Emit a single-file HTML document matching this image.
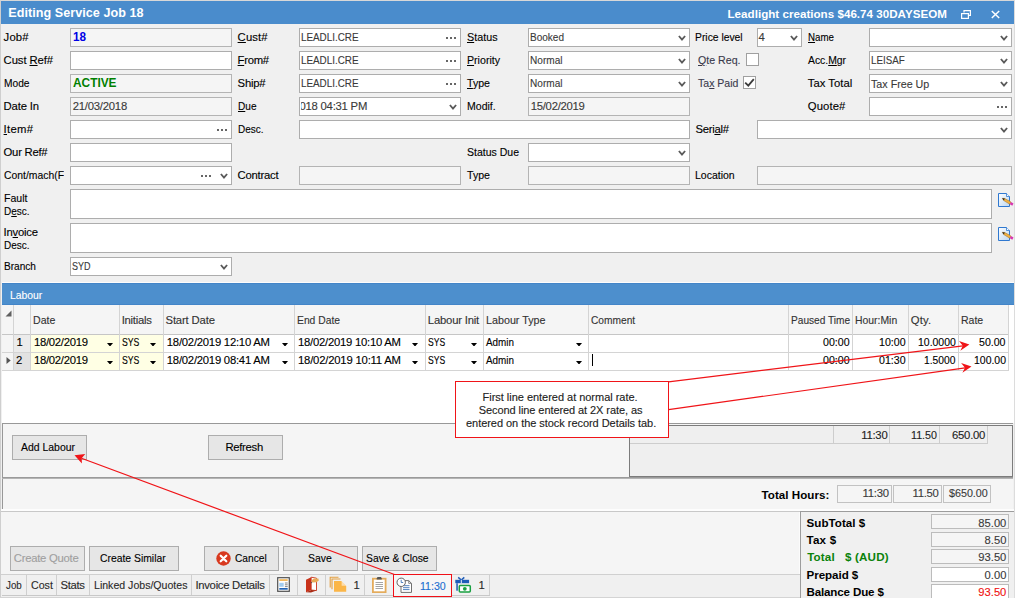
<!DOCTYPE html>
<html lang="en"><head><meta charset="utf-8"><title>Editing Service Job 18</title>
<style>
*{box-sizing:border-box;margin:0;padding:0}
html,body{width:1015px;height:598px;overflow:hidden;background:#f0f0f0;}
body{position:relative;font-family:"Liberation Sans","DejaVu Sans",sans-serif;font-size:11.3px;color:#000;}
.a{position:absolute;white-space:nowrap;}
.t{position:absolute;white-space:pre;height:14px;line-height:14px;-webkit-text-stroke:0.12px currentColor;}
.f{position:absolute;height:19px;border:1px solid #adadad;background:#fff;}
.f.ro{background:#f5f5f5;border-color:#b4b4b4}
.dots{position:absolute;right:4px;top:8px;width:10px;height:2px;background:linear-gradient(90deg,#666 0 2px,transparent 2px 4px,#666 4px 6px,transparent 6px 8px,#666 8px 10px);}
.chev{position:absolute;right:3.500px;top:6px;width:8px;height:7px;}
u{text-decoration:underline;text-underline-offset:1px;text-decoration-thickness:1px}
.btn{position:absolute;border:1px solid #adadad;background:#e6e6e6;}
.vl{position:absolute;width:1px;background:#d4d4d4}
.hl{position:absolute;height:1px;background:#d4d4d4}
.dd{position:absolute;width:6px;height:3px;}
</style></head>
<body>
<div class="a" style="left:0;top:0;width:1015px;height:24px;background:#4a8ccc;border-top:1px solid #d8d8d8;border-right:1px solid #dcdcdc;border-left:1px solid #cfcfcf"></div>
<div class="t" style="left:8.20px;top:5.600000000000001px;font-size:12.6px;color:#fff;font-weight:bold;-webkit-text-stroke:0;letter-spacing:0.050px;">Editing Service Job 18</div>
<div class="t" style="left:727.50px;top:7px;font-size:11.6px;color:#fff;font-weight:bold;-webkit-text-stroke:0;letter-spacing:0.021px;">Leadlight creations $46.74 30DAYSEOM</div>
<svg class="a" style="left:961px;top:10px" width="10" height="9" viewBox="0 0 10 9"><path d="M3 2.600V.6H9.400V5.400H7.400" fill="none" stroke="#fff" stroke-width="1.200"/><rect x=".6" y="3.600" width="6.800" height="4.800" fill="none" stroke="#fff" stroke-width="1.200"/></svg>
<svg class="a" style="left:991px;top:10px" width="9" height="9" viewBox="0 0 9 9"><path d="M.8 1L8.200 8M8.200 1L.8 8" stroke="#fff" stroke-width="1.500"/></svg>
<div class="a" style="left:0;top:24px;width:1px;height:574px;background:#cfcfcf"></div>
<div class="a" style="left:1014px;top:24px;width:1px;height:574px;background:#dcdcdc"></div>
<div class="t" style="left:3.60px;top:30px;font-size:11.3px;color:#000;letter-spacing:0.160px;">Job#</div>
<div class="f ro" style="left:70px;top:28px;width:162px;height:19px"></div>
<div class="t" style="left:72.70px;top:30px;font-size:12px;color:#0000e6;font-weight:bold;-webkit-text-stroke:0;transform-origin:0 0;transform:scaleX(0.9760);">18</div>
<div class="t" style="left:3.60px;top:53px;font-size:11.3px;color:#000;letter-spacing:-0.091px;">Cust <u>R</u>ef#</div>
<div class="f" style="left:70px;top:51px;width:162px;height:19px"></div>
<div class="t" style="left:3.60px;top:76px;font-size:11.3px;color:#000;transform-origin:0 0;transform:scaleX(0.9027);">Mode</div>
<div class="f ro" style="left:70px;top:74px;width:162px;height:19px"></div>
<div class="t" style="left:72.70px;top:76px;font-size:12.6px;color:#008000;font-weight:bold;-webkit-text-stroke:0;transform-origin:0 0;transform:scaleX(0.9420);">ACTIVE</div>
<div class="t" style="left:3.60px;top:99px;font-size:11.3px;color:#000;letter-spacing:-0.157px;">Date In</div>
<div class="f ro" style="left:70px;top:97px;width:162px;height:19px"></div>
<div class="t" style="left:72.70px;top:99px;font-size:11.3px;color:#3a3a3a;letter-spacing:-0.228px;">21/03/2018</div>
<div class="t" style="left:3.60px;top:122px;font-size:11.3px;color:#000;letter-spacing:0.312px;"><u>I</u>tem#</div>
<div class="f" style="left:70px;top:120px;width:162px;height:19px"><i class="dots"></i></div>
<div class="t" style="left:3.60px;top:145px;font-size:11.3px;color:#000;letter-spacing:-0.260px;">Our Ref#</div>
<div class="f" style="left:70px;top:143px;width:162px;height:19px"></div>
<div class="a" style="left:0;top:166px;width:64px;height:19px;overflow:hidden">
<div class="t" style="left:3.60px;top:2px;font-size:11.3px;color:#000;transform-origin:0 0;transform:scaleX(0.9186);">Cont/mach(F</div>
</div>
<div class="f" style="left:70px;top:166px;width:162px;height:19px"><i class="dots" style="right:20px"></i><svg class="chev" viewBox="0 0 8 7"><path d="M0.900 1 L4 4.700 L7.100 1" fill="none" stroke="#5a5a5a" stroke-width="1.800"/></svg></div>
<div class="t" style="left:237.60px;top:30px;font-size:11.3px;color:#000;letter-spacing:0.127px;"><u>C</u>ust#</div>
<div class="f" style="left:299px;top:28px;width:162px;height:19px"><i class="dots"></i></div>
<div class="t" style="left:300.60px;top:30px;font-size:11.3px;color:#3a3a3a;transform-origin:0 0;transform:scaleX(0.8721);">LEADLI.CRE</div>
<div class="t" style="left:237.60px;top:53px;font-size:11.3px;color:#000;letter-spacing:-0.289px;"><u>F</u>rom#</div>
<div class="f" style="left:299px;top:51px;width:162px;height:19px"><i class="dots"></i></div>
<div class="t" style="left:300.60px;top:53px;font-size:11.3px;color:#3a3a3a;transform-origin:0 0;transform:scaleX(0.8721);">LEADLI.CRE</div>
<div class="t" style="left:237.60px;top:76px;font-size:11.3px;color:#000;letter-spacing:-0.232px;">Ship#</div>
<div class="f" style="left:299px;top:74px;width:162px;height:19px"><i class="dots"></i></div>
<div class="t" style="left:300.60px;top:76px;font-size:11.3px;color:#3a3a3a;transform-origin:0 0;transform:scaleX(0.8721);">LEADLI.CRE</div>
<div class="t" style="left:237.60px;top:99px;font-size:11.3px;color:#000;transform-origin:0 0;transform:scaleX(0.8922);"><u>D</u>ue</div>
<div class="f" style="left:299px;top:97px;width:162px;height:19px"><svg class="chev" viewBox="0 0 8 7"><path d="M0.900 1 L4 4.700 L7.100 1" fill="none" stroke="#5a5a5a" stroke-width="1.800"/></svg></div>
<div class="a" style="left:301px;top:97px;width:140px;height:19px;overflow:hidden">
<div class="t" style="left:-1.60px;top:2px;font-size:11.3px;color:#3a3a3a;letter-spacing:-0.222px;">018 04:31 PM</div>
</div>
<div class="t" style="left:237.60px;top:122px;font-size:11.3px;color:#000;transform-origin:0 0;transform:scaleX(0.8832);">Desc.</div>
<div class="f" style="left:299px;top:120px;width:391px;height:19px"></div>
<div class="t" style="left:237.60px;top:168px;font-size:11.3px;color:#000;letter-spacing:-0.245px;">Contract</div>
<div class="f ro" style="left:299px;top:166px;width:162px;height:19px"></div>
<div class="t" style="left:466.80px;top:30px;font-size:11.3px;color:#000;transform-origin:0 0;transform:scaleX(0.9521);"><u>S</u>tatus</div>
<div class="f" style="left:528px;top:28px;width:162px;height:19px"><svg class="chev" viewBox="0 0 8 7"><path d="M0.900 1 L4 4.700 L7.100 1" fill="none" stroke="#5a5a5a" stroke-width="1.800"/></svg></div>
<div class="t" style="left:529.60px;top:30px;font-size:11.3px;color:#3a3a3a;transform-origin:0 0;transform:scaleX(0.8876);">Booked</div>
<div class="t" style="left:466.80px;top:53px;font-size:11.3px;color:#000;transform-origin:0 0;transform:scaleX(0.9390);"><u>P</u>riority</div>
<div class="f" style="left:528px;top:51px;width:162px;height:19px"><svg class="chev" viewBox="0 0 8 7"><path d="M0.900 1 L4 4.700 L7.100 1" fill="none" stroke="#5a5a5a" stroke-width="1.800"/></svg></div>
<div class="t" style="left:529.60px;top:53px;font-size:11.3px;color:#3a3a3a;transform-origin:0 0;transform:scaleX(0.8918);">Normal</div>
<div class="t" style="left:466.80px;top:76px;font-size:11.3px;color:#000;transform-origin:0 0;transform:scaleX(0.9380);"><u>T</u>ype</div>
<div class="f" style="left:528px;top:74px;width:162px;height:19px"><svg class="chev" viewBox="0 0 8 7"><path d="M0.900 1 L4 4.700 L7.100 1" fill="none" stroke="#5a5a5a" stroke-width="1.800"/></svg></div>
<div class="t" style="left:529.60px;top:76px;font-size:11.3px;color:#3a3a3a;transform-origin:0 0;transform:scaleX(0.8918);">Normal</div>
<div class="t" style="left:466.80px;top:99px;font-size:11.3px;color:#000;transform-origin:0 0;transform:scaleX(0.9320);">Modif.</div>
<div class="f ro" style="left:528px;top:97px;width:162px;height:19px"></div>
<div class="t" style="left:530.70px;top:99px;font-size:11.3px;color:#3a3a3a;letter-spacing:-0.262px;">15/02/2019</div>
<div class="t" style="left:466.80px;top:145px;font-size:11.3px;color:#000;transform-origin:0 0;transform:scaleX(0.9306);">Status Due</div>
<div class="f" style="left:528px;top:143px;width:162px;height:19px"><svg class="chev" viewBox="0 0 8 7"><path d="M0.900 1 L4 4.700 L7.100 1" fill="none" stroke="#5a5a5a" stroke-width="1.800"/></svg></div>
<div class="t" style="left:466.80px;top:168px;font-size:11.3px;color:#000;transform-origin:0 0;transform:scaleX(0.9380);">Type</div>
<div class="f ro" style="left:528px;top:166px;width:162px;height:19px"></div>
<div class="t" style="left:695.40px;top:30px;font-size:11.3px;color:#000;transform-origin:0 0;transform:scaleX(0.9147);">Price level</div>
<div class="f" style="left:757px;top:28px;width:45px;height:19px"><svg class="chev" viewBox="0 0 8 7"><path d="M0.900 1 L4 4.700 L7.100 1" fill="none" stroke="#5a5a5a" stroke-width="1.800"/></svg></div>
<div class="t" style="left:758.60px;top:30px;font-size:11.3px;color:#3a3a3a;">4</div>
<div class="t" style="left:697.80px;top:53px;font-size:11.3px;color:#3a3a4c;transform-origin:0 0;transform:scaleX(0.9403);"><u>Q</u>te Req.</div>
<div class="a" style="left:746px;top:53px;width:13px;height:13px;border:1px solid #a0a0a0;background:#fff"></div>
<div class="t" style="left:697.80px;top:76px;font-size:11.3px;color:#3a3a4c;transform-origin:0 0;transform:scaleX(0.9323);">Ta<u>x</u> Paid</div>
<div class="a" style="left:743px;top:76px;width:13px;height:13px;border:1px solid #a0a0a0;background:#fff"><svg style="position:absolute;left:0;top:0" width="11" height="11" viewBox="0 0 11 11"><path d="M1.200 5.600L4.300 8.700L9.800 2.200" fill="none" stroke="#3c3c3c" stroke-width="1.800"/></svg></div>
<div class="t" style="left:695.40px;top:122px;font-size:11.3px;color:#000;letter-spacing:-0.267px;">Seri<u>a</u>l#</div>
<div class="f" style="left:757px;top:120px;width:255px;height:19px"><svg class="chev" viewBox="0 0 8 7"><path d="M0.900 1 L4 4.700 L7.100 1" fill="none" stroke="#5a5a5a" stroke-width="1.800"/></svg></div>
<div class="t" style="left:695.40px;top:168px;font-size:11.3px;color:#000;transform-origin:0 0;transform:scaleX(0.9294);">Location</div>
<div class="f ro" style="left:757px;top:166px;width:255px;height:19px"></div>
<div class="t" style="left:807.80px;top:30px;font-size:11.3px;color:#000;transform-origin:0 0;transform:scaleX(0.8618);"><u>N</u>ame</div>
<div class="f" style="left:869px;top:28px;width:143px;height:19px"><svg class="chev" viewBox="0 0 8 7"><path d="M0.900 1 L4 4.700 L7.100 1" fill="none" stroke="#5a5a5a" stroke-width="1.800"/></svg></div>
<div class="t" style="left:807.80px;top:53px;font-size:11.3px;color:#000;transform-origin:0 0;transform:scaleX(0.9176);">Acc.<u>M</u>gr</div>
<div class="f" style="left:869px;top:51px;width:143px;height:19px"><svg class="chev" viewBox="0 0 8 7"><path d="M0.900 1 L4 4.700 L7.100 1" fill="none" stroke="#5a5a5a" stroke-width="1.800"/></svg></div>
<div class="t" style="left:870.60px;top:53px;font-size:11.3px;color:#3a3a3a;transform-origin:0 0;transform:scaleX(0.8631);">LEISAF</div>
<div class="t" style="left:807.80px;top:76px;font-size:11.3px;color:#000;letter-spacing:0.011px;">Tax Total</div>
<div class="f" style="left:869px;top:74px;width:143px;height:19px"><svg class="chev" viewBox="0 0 8 7"><path d="M0.900 1 L4 4.700 L7.100 1" fill="none" stroke="#5a5a5a" stroke-width="1.800"/></svg></div>
<div class="t" style="left:870.60px;top:77px;font-size:11.3px;color:#3a3a3a;transform-origin:0 0;transform:scaleX(0.9475);">Tax Free Up</div>
<div class="t" style="left:807.80px;top:99px;font-size:11.3px;color:#000;letter-spacing:0.087px;">Quote#</div>
<div class="f" style="left:869px;top:97px;width:143px;height:19px"><i class="dots"></i></div>
<div class="t" style="left:3.60px;top:191px;font-size:11.3px;color:#000;transform-origin:0 0;transform:scaleX(0.9347);">Fault</div>
<div class="t" style="left:3.60px;top:204px;font-size:11.3px;color:#000;transform-origin:0 0;transform:scaleX(0.8832);">D<u>e</u>sc.</div>
<div class="f" style="left:70px;top:189px;width:922px;height:30px"></div>
<div class="t" style="left:3.60px;top:225px;font-size:11.3px;color:#000;letter-spacing:-0.220px;">In<u>v</u>oice</div>
<div class="t" style="left:3.60px;top:238px;font-size:11.3px;color:#000;transform-origin:0 0;transform:scaleX(0.8832);">Desc.</div>
<div class="f" style="left:70px;top:223px;width:922px;height:30px"></div>
<div class="t" style="left:3.60px;top:259px;font-size:11.3px;color:#000;transform-origin:0 0;transform:scaleX(0.8933);">Branch</div>
<div class="f" style="left:70px;top:257px;width:162px;height:19px"><svg class="chev" viewBox="0 0 8 7"><path d="M0.900 1 L4 4.700 L7.100 1" fill="none" stroke="#5a5a5a" stroke-width="1.800"/></svg></div>
<div class="t" style="left:71.60px;top:259px;font-size:11.3px;color:#3a3a3a;transform-origin:0 0;transform:scaleX(0.7967);">SYD</div>
<svg class="a" style="left:998px;top:193px" width="16" height="15" viewBox="0 0 16 15"><defs><linearGradient id="pg193" x1="0" y1="0" x2="1" y2="1"><stop offset="0" stop-color="#fff"/><stop offset="1" stop-color="#bcd6f0"/></linearGradient></defs><path d="M.5 .5H8.500L11.500 3.500V13.500H.5Z" fill="url(#pg193)" stroke="#2f78d0"/><path d="M8.500 .5V3.500H11.500" fill="#fff" stroke="#2f78d0" stroke-width=".8"/><path d="M4.300 5.300L6.800 5.500L13 9L11.800 11.200L5.800 7.600Z" fill="#f0b040" stroke="#a06a18" stroke-width=".5"/><path d="M4.300 5.300L6.800 5.500L5.800 7.600Z" fill="#222"/><path d="M13 9L15.500 10.500L14.300 12.700L11.800 11.200Z" fill="#d838b0"/></svg>
<svg class="a" style="left:998px;top:227px" width="16" height="15" viewBox="0 0 16 15"><defs><linearGradient id="pg227" x1="0" y1="0" x2="1" y2="1"><stop offset="0" stop-color="#fff"/><stop offset="1" stop-color="#bcd6f0"/></linearGradient></defs><path d="M.5 .5H8.500L11.500 3.500V13.500H.5Z" fill="url(#pg227)" stroke="#2f78d0"/><path d="M8.500 .5V3.500H11.500" fill="#fff" stroke="#2f78d0" stroke-width=".8"/><path d="M4.300 5.300L6.800 5.500L13 9L11.800 11.200L5.800 7.600Z" fill="#f0b040" stroke="#a06a18" stroke-width=".5"/><path d="M4.300 5.300L6.800 5.500L5.800 7.600Z" fill="#222"/><path d="M13 9L15.500 10.500L14.300 12.700L11.800 11.200Z" fill="#d838b0"/></svg>
<div class="a" style="left:2px;top:282px;width:1012px;height:1px;background:#fcfcfc"></div>
<div class="a" style="left:2px;top:283px;width:1012px;height:22px;background:#4d8fcd;border-top:1px solid #4385c8;border-bottom:1px solid #4385c8"></div>
<div class="t" style="left:9.50px;top:288px;font-size:11.3px;color:#fff;transform-origin:0 0;transform:scaleX(0.9176);">Labour</div>
<div class="a" style="left:2px;top:305px;width:1012px;height:118px;background:#fff"></div>
<div class="a" style="left:2px;top:305px;width:1006px;height:29px;background:#f5f5f5"></div>
<div class="hl" style="left:2px;top:334px;width:1007px;background:#c6c6c6"></div>
<div class="hl" style="left:2px;top:352px;width:1007px;"></div>
<div class="hl" style="left:2px;top:370px;width:1007px;"></div>
<div class="a" style="left:14px;top:335px;width:16px;height:17px;background:#ebebeb"></div>
<div class="a" style="left:14px;top:353px;width:16px;height:17px;background:#e2e2e2"></div>
<div class="a" style="left:2px;top:335px;width:11px;height:35px;background:#f5f5f5"></div>
<div class="hl" style="left:2px;top:352px;width:12px;"></div>
<div class="a" style="left:31px;top:335px;width:88px;height:17px;background:#ffffe4"></div>
<div class="a" style="left:120px;top:335px;width:43px;height:17px;background:#ffffe4"></div>
<div class="a" style="left:31px;top:353px;width:88px;height:17px;background:#ffffe4"></div>
<div class="a" style="left:120px;top:353px;width:43px;height:17px;background:#ffffe4"></div>
<div class="vl" style="left:13px;top:305px;height:66px"></div>
<div class="vl" style="left:30px;top:305px;height:66px"></div>
<div class="vl" style="left:119px;top:305px;height:66px"></div>
<div class="vl" style="left:163px;top:305px;height:66px"></div>
<div class="vl" style="left:294px;top:305px;height:66px"></div>
<div class="vl" style="left:425px;top:305px;height:66px"></div>
<div class="vl" style="left:483px;top:305px;height:66px"></div>
<div class="vl" style="left:588px;top:305px;height:66px"></div>
<div class="vl" style="left:788px;top:305px;height:66px"></div>
<div class="vl" style="left:852px;top:305px;height:66px"></div>
<div class="vl" style="left:908px;top:305px;height:66px"></div>
<div class="vl" style="left:958px;top:305px;height:66px"></div>
<div class="vl" style="left:1008px;top:305px;height:66px"></div>
<div class="a" style="left:2px;top:423px;width:1px;height:86px;background:#989898"></div>
<div class="t" style="left:32.80px;top:313px;font-size:11.3px;color:#333;transform-origin:0 0;transform:scaleX(0.9353);">Date</div>
<div class="t" style="left:121.70px;top:313px;font-size:11.3px;color:#333;letter-spacing:-0.248px;">Initials</div>
<div class="t" style="left:165.50px;top:313px;font-size:11.3px;color:#333;letter-spacing:-0.150px;">Start Date</div>
<div class="t" style="left:296.60px;top:313px;font-size:11.3px;color:#333;transform-origin:0 0;transform:scaleX(0.9125);">End Date</div>
<div class="t" style="left:427.80px;top:313px;font-size:11.3px;color:#333;letter-spacing:-0.199px;">Labour Init</div>
<div class="t" style="left:485.60px;top:313px;font-size:11.3px;color:#333;transform-origin:0 0;transform:scaleX(0.9504);">Labour Type</div>
<div class="t" style="left:591.00px;top:313px;font-size:11.3px;color:#333;transform-origin:0 0;transform:scaleX(0.9023);">Comment</div>
<div class="t" style="left:790.60px;top:313px;font-size:11.3px;color:#333;transform-origin:0 0;transform:scaleX(0.8978);">Paused Time</div>
<div class="t" style="left:854.70px;top:313px;font-size:11.3px;color:#333;transform-origin:0 0;transform:scaleX(0.9210);">Hour:Min</div>
<div class="t" style="left:910.70px;top:313px;font-size:11.3px;color:#333;letter-spacing:0.171px;">Qty.</div>
<div class="t" style="left:960.50px;top:313px;font-size:11.3px;color:#333;transform-origin:0 0;transform:scaleX(0.9311);">Rate</div>
<svg class="a" style="left:5px;top:310px" width="7" height="7" viewBox="0 0 7 7"><path d="M6.500 .5V6.500H.5Z" fill="#606060"/></svg>
<div class="t" style="left:16.60px;top:335px;font-size:11.3px;color:#000;">1</div>
<div class="t" style="left:33.90px;top:335px;font-size:11.3px;color:#000;letter-spacing:-0.262px;">18/02/2019</div>
<div class="t" style="left:121.90px;top:335px;font-size:11.3px;color:#000;transform-origin:0 0;transform:scaleX(0.7699);">SYS</div>
<div class="t" style="left:166.80px;top:335px;font-size:11.3px;color:#000;letter-spacing:-0.237px;">18/02/2019 12:10 AM</div>
<div class="t" style="left:298.00px;top:335px;font-size:11.3px;color:#000;letter-spacing:-0.248px;">18/02/2019 10:10 AM</div>
<div class="t" style="left:427.80px;top:335px;font-size:11.3px;color:#000;transform-origin:0 0;transform:scaleX(0.7611);">SYS</div>
<div class="t" style="left:486.10px;top:335px;font-size:11.3px;color:#000;transform-origin:0 0;transform:scaleX(0.8740);">Admin</div>
<div class="t" style="left:823.20px;top:335px;font-size:11.3px;color:#000;transform-origin:0 0;transform:scaleX(0.9397);">00:00</div>
<div class="t" style="left:879.10px;top:335px;font-size:11.3px;color:#000;transform-origin:0 0;transform:scaleX(0.9397);">10:00</div>
<div class="t" style="left:917.90px;top:335px;font-size:11.3px;color:#000;transform-origin:0 0;transform:scaleX(0.9253);">10.0000</div>
<div class="t" style="left:979.20px;top:335px;font-size:11.3px;color:#000;transform-origin:0 0;transform:scaleX(0.9362);">50.00</div>
<svg class="dd" style="left:106.5px;top:343px" viewBox="0 0 6 3"><path d="M0 0H6L3.500 3H2.500Z" fill="#000"/></svg>
<svg class="dd" style="left:150.4px;top:343px" viewBox="0 0 6 3"><path d="M0 0H6L3.500 3H2.500Z" fill="#000"/></svg>
<svg class="dd" style="left:282px;top:343px" viewBox="0 0 6 3"><path d="M0 0H6L3.500 3H2.500Z" fill="#000"/></svg>
<svg class="dd" style="left:412px;top:343px" viewBox="0 0 6 3"><path d="M0 0H6L3.500 3H2.500Z" fill="#000"/></svg>
<svg class="dd" style="left:470.6px;top:343px" viewBox="0 0 6 3"><path d="M0 0H6L3.500 3H2.500Z" fill="#000"/></svg>
<svg class="dd" style="left:575.6px;top:343px" viewBox="0 0 6 3"><path d="M0 0H6L3.500 3H2.500Z" fill="#000"/></svg>
<div class="t" style="left:15.90px;top:353px;font-size:11.3px;color:#000;">2</div>
<div class="t" style="left:33.90px;top:353px;font-size:11.3px;color:#000;letter-spacing:-0.262px;">18/02/2019</div>
<div class="t" style="left:121.90px;top:353px;font-size:11.3px;color:#000;transform-origin:0 0;transform:scaleX(0.7699);">SYS</div>
<div class="t" style="left:166.80px;top:353px;font-size:11.3px;color:#000;letter-spacing:-0.237px;">18/02/2019 08:41 AM</div>
<div class="t" style="left:298.00px;top:353px;font-size:11.3px;color:#000;letter-spacing:-0.201px;">18/02/2019 10:11 AM</div>
<div class="t" style="left:427.80px;top:353px;font-size:11.3px;color:#000;transform-origin:0 0;transform:scaleX(0.7611);">SYS</div>
<div class="t" style="left:486.10px;top:353px;font-size:11.3px;color:#000;transform-origin:0 0;transform:scaleX(0.8740);">Admin</div>
<div class="t" style="left:823.20px;top:353px;font-size:11.3px;color:#000;transform-origin:0 0;transform:scaleX(0.9397);">00:00</div>
<div class="t" style="left:879.10px;top:353px;font-size:11.3px;color:#000;transform-origin:0 0;transform:scaleX(0.9397);">01:30</div>
<div class="t" style="left:924.20px;top:353px;font-size:11.3px;color:#000;transform-origin:0 0;transform:scaleX(0.9110);">1.5000</div>
<div class="t" style="left:973.70px;top:353px;font-size:11.3px;color:#000;transform-origin:0 0;transform:scaleX(0.9254);">100.00</div>
<svg class="dd" style="left:106.5px;top:361px" viewBox="0 0 6 3"><path d="M0 0H6L3.500 3H2.500Z" fill="#000"/></svg>
<svg class="dd" style="left:150.4px;top:361px" viewBox="0 0 6 3"><path d="M0 0H6L3.500 3H2.500Z" fill="#000"/></svg>
<svg class="dd" style="left:282px;top:361px" viewBox="0 0 6 3"><path d="M0 0H6L3.500 3H2.500Z" fill="#000"/></svg>
<svg class="dd" style="left:412px;top:361px" viewBox="0 0 6 3"><path d="M0 0H6L3.500 3H2.500Z" fill="#000"/></svg>
<svg class="dd" style="left:470.6px;top:361px" viewBox="0 0 6 3"><path d="M0 0H6L3.500 3H2.500Z" fill="#000"/></svg>
<svg class="dd" style="left:575.6px;top:361px" viewBox="0 0 6 3"><path d="M0 0H6L3.500 3H2.500Z" fill="#000"/></svg>
<div class="a" style="left:592px;top:354px;width:1px;height:12px;background:#000"></div>
<svg class="a" style="left:5.600px;top:357px" width="5" height="7" viewBox="0 0 5 7"><path d="M.5 0L4.700 3.500L.5 7Z" fill="#555"/></svg>
<div class="a" style="left:3px;top:424px;width:1010px;height:53px;background:#f5f5f5"></div>
<div class="hl" style="left:2px;top:423px;width:1011px;background:#989898"></div>
<div class="btn" style="left:12px;top:435px;width:75px;height:25px"></div>
<div class="t" style="left:20.80px;top:440px;font-size:11.3px;color:#000;transform-origin:0 0;transform:scaleX(0.9243);">Add Labour</div>
<div class="btn" style="left:208px;top:435px;width:75px;height:25px"></div>
<div class="t" style="left:225.40px;top:440px;font-size:11.3px;color:#000;letter-spacing:-0.292px;">Refresh</div>
<div class="a" style="left:629px;top:425px;width:384px;height:52px;border:1px solid #7c7c7c;background:#efefef"></div>
<div class="hl" style="left:630px;top:443px;width:358px;background:#cdcdcd"></div>
<div class="vl" style="left:833px;top:426px;height:17px;background:#cdcdcd"></div>
<div class="vl" style="left:889px;top:426px;height:17px;background:#cdcdcd"></div>
<div class="vl" style="left:939px;top:426px;height:17px;background:#cdcdcd"></div>
<div class="vl" style="left:987px;top:426px;height:17px;background:#cdcdcd"></div>
<div class="t" style="left:861.30px;top:428px;font-size:11.3px;color:#222;letter-spacing:-0.265px;">11:30</div>
<div class="t" style="left:911.40px;top:428px;font-size:11.3px;color:#222;transform-origin:0 0;transform:scaleX(0.9469);">11.50</div>
<div class="t" style="left:952.00px;top:428px;font-size:11.3px;color:#222;letter-spacing:-0.236px;">650.00</div>
<div class="a" style="left:2px;top:477px;width:1011px;height:1px;background:#9a9a9a"></div>
<div class="a" style="left:2px;top:478px;width:1011px;height:1px;background:#b4b4b4"></div>
<div class="a" style="left:3px;top:479px;width:1010px;height:30px;background:#f5f5f5"></div>
<div class="a" style="left:1px;top:509px;width:1013px;height:2px;background:#fdfdfd"></div>
<div class="a" style="left:1px;top:511px;width:800px;height:1px;background:#c8c8c8"></div>
<div class="t" style="left:761.60px;top:488px;font-size:11.6px;color:#000;font-weight:bold;-webkit-text-stroke:0;letter-spacing:0.022px;">Total Hours:</div>
<div class="a" style="left:837px;top:485px;width:55px;height:18px;border:1px solid #c2c2c2;background:#f5f5f5"></div>
<div class="a" style="left:893px;top:485px;width:49px;height:18px;border:1px solid #c2c2c2;background:#f5f5f5"></div>
<div class="a" style="left:943px;top:485px;width:48px;height:18px;border:1px solid #c2c2c2;background:#f5f5f5"></div>
<div class="t" style="left:862.60px;top:486px;font-size:11.3px;color:#3a3a3a;letter-spacing:-0.265px;">11:30</div>
<div class="t" style="left:912.50px;top:486px;font-size:11.3px;color:#3a3a3a;letter-spacing:-0.265px;">11.50</div>
<div class="t" style="left:949.20px;top:486px;font-size:11.3px;color:#3a3a3a;transform-origin:0 0;transform:scaleX(0.9498);">$650.00</div>
<div class="a" style="left:1px;top:512px;width:799px;height:62px;background:#f5f5f5"></div>
<div class="a" style="left:1px;top:574px;width:799px;height:24px;background:#f0f0f0;border-top:1px solid #d0d0d0"></div>
<div class="btn" style="left:10px;top:546px;width:75px;height:25px"></div>
<div class="t" style="left:13.80px;top:551px;font-size:11.3px;color:#a0a0a0;letter-spacing:-0.260px;">Create Quote</div>
<div class="btn" style="left:89px;top:546px;width:90px;height:25px"></div>
<div class="t" style="left:99.60px;top:551px;font-size:11.3px;color:#000;transform-origin:0 0;transform:scaleX(0.9178);">Create Similar</div>
<div class="btn" style="left:204px;top:546px;width:75px;height:25px"></div>
<svg class="a" style="left:216px;top:551px" width="15" height="15" viewBox="0 0 15 15"><circle cx="7.500" cy="7.500" r="7.200" fill="#d8391f"/><path d="M4.700 4.700L10.300 10.300M10.300 4.700L4.700 10.300" stroke="#fff" stroke-width="2.200" stroke-linecap="round"/></svg>
<div class="t" style="left:234.60px;top:551px;font-size:11.3px;color:#000;transform-origin:0 0;transform:scaleX(0.9006);">Cancel</div>
<div class="btn" style="left:283px;top:546px;width:75px;height:25px"></div>
<div class="t" style="left:307.50px;top:551px;font-size:11.3px;color:#000;transform-origin:0 0;transform:scaleX(0.9199);">Save</div>
<div class="btn" style="left:362px;top:546px;width:75px;height:25px"></div>
<div class="t" style="left:366.40px;top:551px;font-size:11.3px;color:#000;transform-origin:0 0;transform:scaleX(0.9142);">Save &amp; Close</div>
<div class="t" style="left:6.20px;top:578px;font-size:11.3px;color:#2a2a2a;transform-origin:0 0;transform:scaleX(0.8685);">Job</div>
<div class="t" style="left:30.70px;top:578px;font-size:11.3px;color:#2a2a2a;transform-origin:0 0;transform:scaleX(0.9431);">Cost</div>
<div class="t" style="left:60.40px;top:578px;font-size:11.3px;color:#2a2a2a;letter-spacing:-0.291px;">Stats</div>
<div class="t" style="left:93.50px;top:578px;font-size:11.3px;color:#2a2a2a;transform-origin:0 0;transform:scaleX(0.9360);">Linked Jobs/Quotes</div>
<div class="t" style="left:195.40px;top:578px;font-size:11.3px;color:#2a2a2a;letter-spacing:-0.279px;">Invoice Details</div>
<div class="vl" style="left:26px;top:575px;height:20px;background:#cfcfcf"></div>
<div class="vl" style="left:56px;top:575px;height:20px;background:#cfcfcf"></div>
<div class="vl" style="left:89px;top:575px;height:20px;background:#cfcfcf"></div>
<div class="vl" style="left:191px;top:575px;height:20px;background:#cfcfcf"></div>
<div class="vl" style="left:269px;top:575px;height:20px;background:#cfcfcf"></div>
<div class="vl" style="left:297px;top:575px;height:20px;background:#cfcfcf"></div>
<div class="vl" style="left:325px;top:575px;height:20px;background:#cfcfcf"></div>
<div class="vl" style="left:364px;top:575px;height:20px;background:#cfcfcf"></div>
<div class="vl" style="left:489px;top:575px;height:20px;background:#cfcfcf"></div>
<svg class="a" style="left:277px;top:577px" width="13" height="15" viewBox="0 0 13 15"><rect x=".7" y=".7" width="11.600" height="13.600" fill="#fff" stroke="#505050" stroke-width="1.200"/><rect x="2.300" y="2.300" width="8.400" height="1.500" fill="#f0a838"/><rect x="2.300" y="5.800" width="4.400" height="4" fill="#a4cdf0"/><path d="M7.900 6H10.700M7.900 7.800H10.700M7.900 9.600H10.700" stroke="#666" stroke-width=".8"/><rect x="2.300" y="11" width="8.400" height="1.700" fill="#2464b4"/></svg>
<svg class="a" style="left:305px;top:576px" width="15" height="17" viewBox="0 0 15 17"><path d="M1 3.800L6.200 1.200V14L1 16.200Z" fill="#c8321a"/><path d="M6.200 1.200L11.500 2.200V14.600L6.200 14Z" fill="#fff" stroke="#c8321a" stroke-width=".9"/><path d="M1 16.200L6.200 14L11.500 14.600L6 16.600Z" fill="#a82a14"/><path d="M6.500 4.200L9 2.600L13.400 2.400L13.800 4.600L11.500 6.200L7.200 6.400Z" fill="#e8ac58"/><circle cx="6.400" cy="6.600" r=".7" fill="#555"/></svg>
<svg class="a" style="left:329px;top:576px" width="18" height="17" viewBox="0 0 18 17"><path d="M1.200 11.500V1.200H9.500" fill="none" stroke="#e4a040" stroke-width="1.100"/><path d="M3 13.300V3H11.500" fill="none" stroke="#e4a040" stroke-width="1.100"/><path d="M5 5H12.300L17.200 10V15.800H5Z" fill="#fbb648"/><path d="M12.600 5.300V9.700H17Z" fill="#fff" opacity=".55"/></svg>
<div class="t" style="left:353.40px;top:578px;font-size:11.3px;color:#2a2a2a;">1</div>
<svg class="a" style="left:372px;top:576px" width="15" height="17" viewBox="0 0 15 17"><rect x=".9" y="2.700" width="12.700" height="13.500" fill="#fff" stroke="#e4ac5c" stroke-width="1.800"/><path d="M4.700 2.600L5.500 1H9L9.800 2.600V3.600H4.700Z" fill="#555"/><path d="M3.500 6.500H11M3.500 8.500H11M3.500 10.500H11M3.500 12.500H11" stroke="#9a9a9a" stroke-width=".9"/></svg>
<div class="hl" style="left:2px;top:595px;width:488px;background:#c8c8c8"></div>
<div class="hl" style="left:0px;top:597px;width:800px;background:#d4d4d4"></div>
<div class="a" style="left:393px;top:574px;width:59px;height:23px;border:1px solid #f01018;background:#f6f6f6"></div>
<svg class="a" style="left:396px;top:577px" width="17" height="17" viewBox="0 0 17 17"><path d="M5 3.600H12.700L15.500 6.400V15.400H5Z" fill="#fff" stroke="#707070"/><path d="M12.700 3.600V6.400H15.500" fill="none" stroke="#707070" stroke-width=".8"/><path d="M8 8.700H13.500M7 10.700H13.500M7 12.600H13.500" stroke="#3c74b8" stroke-width=".9"/><circle cx="5.200" cy="5.300" r="4.200" fill="#fff" stroke="#606060" stroke-width="1"/><path d="M5.200 2.800V5.500H7.200" fill="none" stroke="#3c74b8" stroke-width=".9"/></svg>
<div class="t" style="left:420.30px;top:579px;font-size:11.3px;color:#1a6ed0;transform-origin:0 0;transform:scaleX(0.9396);">11:30</div>
<svg class="a" style="left:454px;top:576px" width="18" height="18" viewBox="0 0 18 18"><path d="M4.200 1.400L7.300 4L10.300 1.400" fill="none" stroke="#1e5cb8" stroke-width="1.500"/><rect x="1.300" y="3.800" width="13.800" height="3.400" fill="#1e5cb8"/><rect x="2.300" y="7.200" width="1.500" height="7.500" fill="#1e5cb8"/><path d="M7.300 3.800V7.200" stroke="#fff" stroke-width=".9"/><rect x="5.300" y="9.500" width="11" height="6.600" rx="1" fill="#fff" stroke="#18a040" stroke-width="1.500"/><circle cx="10.800" cy="12.800" r="1.900" fill="#18a040"/></svg>
<div class="t" style="left:478.50px;top:578px;font-size:11.3px;color:#2a2a2a;">1</div>
<div class="a" style="left:799px;top:512px;width:1px;height:62px;background:#fbfbfb"></div>
<div class="a" style="left:800px;top:511px;width:214px;height:87px;background:#f0f0f0;border-left:1px solid #9c9c9c;border-top:1px solid #9c9c9c"></div>
<div class="t" style="left:806.50px;top:516px;font-size:11.6px;color:#000;font-weight:bold;-webkit-text-stroke:0;letter-spacing:0.044px;">SubTotal $</div>
<div class="a" style="left:931px;top:514px;width:78px;height:15px;border:1px solid #bcbcbc;background:#f5f5f5"></div>
<div class="t" style="left:978.34px;top:516px;font-size:11.2px;color:#3a3a3a;">85.00</div>
<div class="t" style="left:806.50px;top:533px;font-size:11.6px;color:#000;font-weight:bold;-webkit-text-stroke:0;letter-spacing:0.219px;">Tax $</div>
<div class="a" style="left:931px;top:532px;width:78px;height:15px;border:1px solid #bcbcbc;background:#f5f5f5"></div>
<div class="t" style="left:984.62px;top:533px;font-size:11.2px;color:#3a3a3a;">8.50</div>
<div class="t" style="left:807.20px;top:550px;font-size:11.6px;color:#0a820a;font-weight:bold;-webkit-text-stroke:0;letter-spacing:0.168px;">Total   $ (AUD)</div>
<div class="a" style="left:931px;top:549px;width:78px;height:15px;border:1px solid #bcbcbc;background:#f5f5f5"></div>
<div class="t" style="left:978.34px;top:550px;font-size:11.2px;color:#3a3a3a;">93.50</div>
<div class="t" style="left:806.50px;top:568px;font-size:11.6px;color:#000;font-weight:bold;-webkit-text-stroke:0;letter-spacing:-0.050px;">Prepaid $</div>
<div class="a" style="left:931px;top:567px;width:78px;height:15px;border:1px solid #bcbcbc;background:#fff"></div>
<div class="t" style="left:984.62px;top:568px;font-size:11.2px;color:#3a3a3a;">0.00</div>
<div class="t" style="left:806.50px;top:585px;font-size:11.6px;color:#000;font-weight:bold;-webkit-text-stroke:0;letter-spacing:-0.157px;">Balance Due $</div>
<div class="a" style="left:931px;top:584px;width:78px;height:15px;border:1px solid #bcbcbc;background:#fff"></div>
<div class="t" style="left:978.34px;top:585px;font-size:11.2px;color:#f01010;">93.50</div>
<svg class="a" style="left:0;top:0" width="1015" height="598" viewBox="0 0 1015 598">
<g fill="none" stroke="#f01418" stroke-width="1.200">
<path d="M668.500 381.800L963 345.800"/><path d="M668.500 409.700L965.200 367.800"/><path d="M394.500 574.500L81.500 458.300"/>
</g>
<g fill="#f01418"><path d="M969.400 344.500L959 340.900L962.800 345.800L960.300 350.700Z"/><path d="M971.500 366.500L961.100 362.900L965 367.800L962.400 372.700Z"/><path d="M74.500 455.300L85.200 453.900L81.700 458.300L81.900 463.400Z"/></g>
<rect x="455.500" y="381.500" width="213" height="56" fill="#fff" stroke="#f01418"/>
</svg>
<div class="t" style="left:482.60px;top:390px;font-size:11px;color:#222;letter-spacing:-0.028px;">First line entered at normal rate.</div>
<div class="t" style="left:478.80px;top:403px;font-size:11px;color:#222;letter-spacing:-0.082px;">Second line entered at 2X rate, as</div>
<div class="t" style="left:466.00px;top:416px;font-size:11px;color:#222;letter-spacing:-0.046px;">entered on the stock record Details tab.</div>
</body></html>
